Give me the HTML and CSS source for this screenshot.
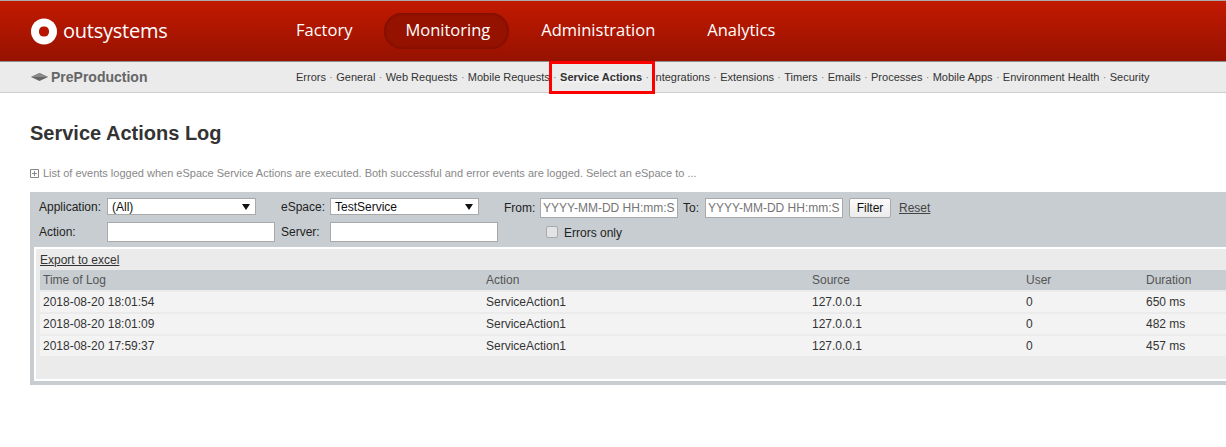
FILE: index.html
```html
<!DOCTYPE html>
<html lang="en">
<head>
<meta charset="utf-8">
<title>Service Actions Log</title>
<link rel="stylesheet" href="styles.css">
</head>
<body>
<header class="topbar">
  <a class="logo" href="#">
    <svg class="logo-mark" width="26" height="27" viewBox="0 0 26 27"><circle cx="13" cy="13.5" r="13" fill="#fff"/><rect x="8" y="8.5" width="10" height="10" rx="4.5" fill="#b71700"/></svg>
    <span class="logo-text">outsystems</span>
  </a>
  <nav class="mainnav">
    <a class="mainnav-item" href="#">Factory</a>
    <a class="mainnav-item is-active" href="#">Monitoring</a>
    <a class="mainnav-item" href="#">Administration</a>
    <a class="mainnav-item" href="#">Analytics</a>
  </nav>
</header>
<div class="subbar">
  <div class="env">
    <svg class="env-icon" width="17" height="8" viewBox="0 0 17 8"><path d="M0 4 8.5 0 17 4 8.5 8Z" fill="#666"/><path d="M0 4 8.5 0 17 4Z" fill="#8a8a8a"/></svg>
    <span>PreProduction</span>
  </div>
  <nav class="subnav">
    <a href="#">Errors</a><i>·</i><a href="#">General</a><i>·</i><a href="#">Web Requests</a><i>·</i><a href="#">Mobile Requests</a><i>·</i><a class="is-current" href="#">Service Actions</a><i>·</i><a href="#">Integrations</a><i>·</i><a href="#">Extensions</a><i>·</i><a href="#">Timers</a><i>·</i><a href="#">Emails</a><i>·</i><a href="#">Processes</a><i>·</i><a href="#">Mobile Apps</a><i>·</i><a href="#">Environment Health</a><i>·</i><a href="#">Security</a>
  </nav>
  <div class="highlight"></div>
</div>
<main class="main">
  <h1 class="title">Service Actions Log</h1>
  <p class="desc"><svg class="desc-icon" width="9" height="9" viewBox="0 0 9 9"><path d="M.5.5h8v8h-8zM2 4.5h5M4.5 2v5" fill="none" stroke="#888"/></svg><span>List of events logged when eSpace Service Actions are executed. Both successful and error events are logged. Select an eSpace to ...</span></p>
  <section class="panel">
    <form class="filters">
      <label class="flabel raised">Application:</label>
      <span class="selectwrap"><select class="fselect"><option>(All)</option></select></span>
      <label class="flabel pad raised">eSpace:</label>
      <span class="selectwrap"><select class="fselect"><option>TestService</option></select></span>
      <label class="flabel pad">From:</label>
      <input class="finput" type="text" placeholder="YYYY-MM-DD HH:mm:SS">
      <label class="flabel pad-to">To:</label>
      <input class="finput" type="text" placeholder="YYYY-MM-DD HH:mm:SS">
      <div class="actions"><button class="btn" type="button">Filter</button><a class="reset" href="#">Reset</a></div>
      <label class="flabel">Action:</label>
      <input class="finput" type="text">
      <label class="flabel pad">Server:</label>
      <input class="finput" type="text">
      <label class="errors"><input class="check" type="checkbox"><span>Errors only</span></label>
    </form>
    <div class="results">
      <a class="export" href="#">Export to excel</a>
      <table class="log">
        <colgroup><col class="c1"><col class="c2"><col class="c3"><col class="c4"><col class="c5"></colgroup>
        <thead><tr><th>Time of Log</th><th>Action</th><th>Source</th><th>User</th><th>Duration</th></tr></thead>
        <tbody>
          <tr><td>2018-08-20 18:01:54</td><td>ServiceAction1</td><td>127.0.0.1</td><td>0</td><td>650 ms</td></tr>
          <tr><td>2018-08-20 18:01:09</td><td>ServiceAction1</td><td>127.0.0.1</td><td>0</td><td>482 ms</td></tr>
          <tr><td>2018-08-20 17:59:37</td><td>ServiceAction1</td><td>127.0.0.1</td><td>0</td><td>457 ms</td></tr>
        </tbody>
      </table>
    </div>
  </section>
</main>
</body>
</html>
```
FILE: styles.css
```css
* { box-sizing: border-box; }
html, body { margin: 0; height: 100%; overflow: hidden; background: #fff; }
body { font-family: "Liberation Sans", Arial, sans-serif; font-size: 12px; color: #333; }
a { color: inherit; text-decoration: none; }

.topbar {
  height: 62px;
  border-top: 1px solid #aaa;
  border-bottom: 1px solid #8d8d8d;
  background: linear-gradient(#c21900, #961200);
  display: flex;
  align-items: center;
}
.logo { display: flex; align-items: center; margin-left: 31px; width: 245px; color: #fff; }
.logo-mark { flex: none; }
.logo-text { font-family: "Open Sans", sans-serif; font-size: 20px; margin-left: 6px; letter-spacing: -.24px; padding-bottom: 2px; }
.mainnav { display: flex; align-items: center; gap: 12px; }
.mainnav-item {
  font-family: "Open Sans", sans-serif;
  font-size: 16.5px;
  color: #fff;
  height: 36px;
  line-height: 34px;
  padding: 0 20px;
  border-radius: 18px;
}
.mainnav-item.is-active {
  padding: 0 19px 0 21px;
  background: #961200;
  box-shadow: inset 0 0 3px 1px #7b0e00;
}

.subbar {
  position: relative;
  height: 31px;
  background: #ebebeb;
  border-bottom: 1px solid #ccc;
  display: flex;
  align-items: center;
}
.env { width: 296px; padding-left: 31px; display: flex; align-items: center; gap: 3px; font-size: 14px; font-weight: bold; color: #666; }
.subnav { font-size: 11px; color: #333; white-space: nowrap; }
.subnav i { font-style: normal; color: #888; padding: 0 3.3px; }
.is-current { font-weight: bold; background: #f0f0f0; }
.highlight {
  position: absolute;
  left: 549px;
  top: -1px;
  width: 106px;
  height: 33px;
  border: 3px solid #f00;
}

.main { overflow: hidden; }
.title { margin: 28px 0 0 30px; font-size: 20px; line-height: 24px; font-weight: bold; color: #333; }
.desc { margin: 20px 0 0 30px; height: 16px; line-height: 16px; font-size: 11px; color: #888; display: flex; align-items: center; gap: 4px; white-space: nowrap; }
.desc-icon { flex: none; }

.panel { margin: 11px -20px 0 30px; background: #c8cdd1; padding-bottom: 4px; width: 1216px; }
.filters {
  height: 55px;
  padding: 6px 0 0 9px;
  display: grid;
  grid-template-columns: 68px 168px 55px 168px 42px 138px 27px 138px auto;
  grid-template-rows: 20px 20px;
  row-gap: 4px;
  align-items: center;
}
.flabel { color: #222; }
.raised { margin-bottom: 2px; }
.pad { padding-left: 6px; }
.pad-to { padding-left: 5px; }
.selectwrap { position: relative; align-self: start; width: 149px; height: 17px; display: block; }
.selectwrap::after {
  content: "";
  position: absolute;
  right: 6px;
  top: 6px;
  border: 4px solid transparent;
  border-top: 6px solid #111;
  border-bottom: 0;
}
.fselect {
  appearance: none;
  width: 100%;
  height: 17px;
  padding: 0 4px;
  border: 1px solid #a9a9a9;
  border-radius: 0;
  background: #fff;
  font: 12px "Liberation Sans", Arial, sans-serif;
  color: #111;
}
.finput {
  width: 100%;
  height: 20px;
  padding: 1px 2px;
  border: 1px solid #a9a9a9;
  border-radius: 0;
  background: #fff;
  font: 12px "Liberation Sans", Arial, sans-serif;
}
.finput::placeholder { color: #757575; opacity: 1; }
.actions { display: flex; align-items: center; padding-left: 6px; }
.btn {
  width: 42px;
  height: 20px;
  padding: 0;
  border: 1px solid #a9a9a9;
  border-radius: 2px;
  background: linear-gradient(#fafafa, #ececec);
  font: 12px "Liberation Sans", Arial, sans-serif;
  color: #111;
}
.reset { margin-left: 8px; color: #444; text-decoration: underline; }
.errors { grid-column: 5 / 9; display: flex; align-items: center; padding: 2px 0 0 48px; gap: 6px; color: #222; }
.check {
  appearance: none;
  width: 12px;
  height: 12px;
  margin: 0 0 2px;
  border: 1px solid #a9a9a9;
  border-radius: 2px;
  background: #e2e4e6;
}

.results {
  margin-left: 4px;
  border: 2px solid #fff;
  border-right: 0;
  background: #ebebeb;
  height: 134px;
  padding: 2px 0 0 4px;
}
.export { display: block; height: 19px; line-height: 19px; color: #333; text-decoration: underline; }
.log { table-layout: fixed; width: 1186px; border-collapse: separate; border-spacing: 0; }
.c1 { width: 443px; } .c2 { width: 326px; } .c3 { width: 214px; } .c4 { width: 120px; } .c5 { width: 83px; }
.log th { height: 20px; padding: 0 3px; background: #c8cdd1; color: #555; font-weight: normal; text-align: left; }
.log td { height: 22px; padding: 0 3px; background: #f3f3f3; border-top: 2px solid #ebebeb; color: #333; background-clip: padding-box; }
```
